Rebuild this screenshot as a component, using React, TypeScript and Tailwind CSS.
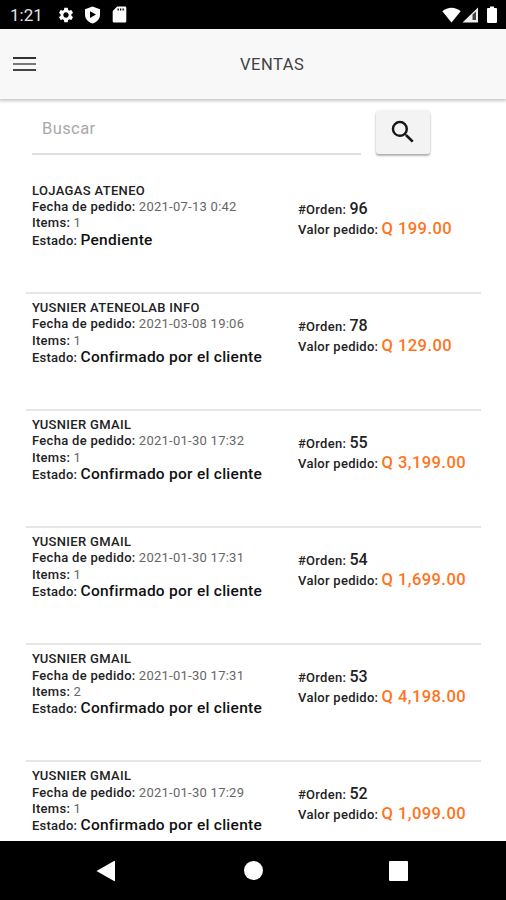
import React from 'react';
import { MdSearch, MdSettings } from 'react-icons/md';

interface Order {
  id: number;
  customer: string;
  date: string;
  items: number;
  status: string;
  total: string;
}

const ORDERS: Order[] = [
  { id: 96, customer: 'LOJAGAS ATENEO', date: '2021-07-13 0:42', items: 1, status: 'Pendiente', total: 'Q 199.00' },
  { id: 78, customer: 'YUSNIER ATENEOLAB INFO', date: '2021-03-08 19:06', items: 1, status: 'Confirmado por el cliente', total: 'Q 129.00' },
  { id: 55, customer: 'YUSNIER GMAIL', date: '2021-01-30 17:32', items: 1, status: 'Confirmado por el cliente', total: 'Q 3,199.00' },
  { id: 54, customer: 'YUSNIER GMAIL', date: '2021-01-30 17:31', items: 1, status: 'Confirmado por el cliente', total: 'Q 1,699.00' },
  { id: 53, customer: 'YUSNIER GMAIL', date: '2021-01-30 17:31', items: 2, status: 'Confirmado por el cliente', total: 'Q 4,198.00' },
  { id: 52, customer: 'YUSNIER GMAIL', date: '2021-01-30 17:29', items: 1, status: 'Confirmado por el cliente', total: 'Q 1,099.00' },
];

const StatusBar: React.FC = () => (
  <div className="h-[29px] shrink-0 bg-black text-white flex items-center justify-between pl-[10px] pr-[9px]">
    <div className="flex items-center">
      <span className="w-[47px] text-[17px] leading-none text-[#e4e4e4] pt-[2px]">1:21</span>
      <MdSettings className="w-[18px] h-[18px]" />
      <svg className="ml-[9px] w-[17px] h-[18px]" viewBox="0 0 17 18" fill="white">
        <path d="M8.500 0.500L16 3.200V8.500C16 13 12.700 16.300 8.500 17.500C4.300 16.300 1 13 1 8.500V3.200Z" />
        <path d="M6 5.200V12L12 8.600Z" fill="black" />
      </svg>
      <svg className="ml-[11px] w-[15px] h-[17px]" viewBox="0 0 15 17" fill="white">
        <path d="M5.200 0.500H13a1.300 1.300 0 0 1 1.300 1.300V15.200a1.300 1.300 0 0 1-1.300 1.300H2a1.300 1.300 0 0 1-1.300-1.300V5Z" />
        <path d="M5.500 2.500h1.300v2H5.500zM8 2.500h1.300v2H8zM10.500 2.500h1.300v2h-1.300z" fill="black" />
      </svg>
    </div>
    <div className="flex items-center">
      <svg className="w-[19px] h-[16px]" viewBox="0 0 19 16" fill="white">
        <path d="M0.300 4.300C5.500-0.500 13.500-0.500 18.700 4.300L9.500 15.500Z" />
      </svg>
      <svg className="ml-px w-[17px] h-[16px]" viewBox="0 0 17 16">
        <path d="M16 0.500V15.500H0.500Z" fill="#eee" />
        <path d="M10.500 7.500L14 4.500V13H10.500Z" fill="#444" />
      </svg>
      <svg className="ml-[8px] w-[10px] h-[17px]" viewBox="0 0 10 17" fill="white">
        <path d="M3 0.500H7V2H9a1 1 0 0 1 1 1V16a1 1 0 0 1-1 1H1a1 1 0 0 1-1-1V3a1 1 0 0 1 1-1H3Z" />
      </svg>
    </div>
  </div>
);

const Header: React.FC = () => (
  <header className="h-[70px] shrink-0 bg-[#f8f8f8] shadow-[0_1px_3px_1px_rgba(0,0,0,0.22)] flex items-center pl-[13px]">
    <button className="flex flex-col gap-[4px] w-[23px]" aria-label="Menu">
      <span className="h-[2px] w-full bg-[#333]" />
      <span className="h-[2px] w-full bg-[#777]" />
      <span className="h-[2px] w-full bg-[#444]" />
    </button>
    <h1 className="ml-[204px] pt-[2px] text-[16.5px] leading-5 tracking-[0.5px] text-[#424242]">VENTAS</h1>
  </header>
);

const SearchRow: React.FC = () => (
  <div className="h-[78px] shrink-0 flex items-start pl-[32px] pt-[11px]">
    <div className="w-[329px] h-[45px] border-b-2 border-[#dedede] pl-[10px] pt-[9px]">
      <span className="block text-[16.5px] leading-5 tracking-[0.4px] text-[#a9a9a9]">Buscar</span>
    </div>
    <button
      className="ml-[15px] mt-px w-[54px] h-[43px] rounded-[3px] bg-[#f3f3f3] shadow-[0_2px_2px_rgba(0,0,0,0.28),0_0_3px_rgba(0,0,0,0.12)] flex items-center justify-center"
      aria-label="Buscar"
    >
      <MdSearch className="w-[30px] h-[30px] mb-[2px] text-[#161616]" />
    </button>
  </div>
);

const OrderRow: React.FC<{ order: Order }> = ({ order }) => (
  <li className="h-[117.1px] shrink-0 border-b-2 border-[#e6e6e6] flex pl-[6px] text-[13px] text-[#222] whitespace-nowrap">
    <div className="w-[266px] pt-[6px] leading-[16.2px]">
      <p className="font-medium tracking-[0.34px]">{order.customer}</p>
      <p>
        <span className="font-medium tracking-[0.3px]">Fecha de pedido:</span> <span className="tracking-[0.26px] text-[#666]">{order.date}</span>
      </p>
      <p>
        <span className="font-medium tracking-[0.3px]">Items:</span> <span className="text-[#666]">{order.items}</span>
      </p>
      <p className="leading-[16px]">
        <span className="font-medium tracking-[0.25px]">Estado:</span> <span className="text-[15.5px] font-medium tracking-[0.26px] text-[#111]">{order.status}</span>
      </p>
    </div>
    <div className="pt-[22px] leading-[19px]">
      <p>
        <span className="font-medium tracking-[0.28px]">#Orden:</span> <span className="text-[16px] font-medium text-[#222]">{order.id}</span>
      </p>
      <p>
        <span className="font-medium tracking-[0.28px]">Valor pedido:</span> <span className="text-[16.5px] font-medium tracking-[0.45px] text-[#ff7420]">{order.total}</span>
      </p>
    </div>
  </li>
);

const NavBar: React.FC = () => (
  <nav className="h-[59px] shrink-0 bg-black flex items-center pl-[96px]">
    <svg className="w-[19px] h-[22px]" viewBox="0 0 19 22" fill="white">
      <path d="M0.500 11L18 1Q19 0.500 19 1.500V20.500Q19 21.500 18 21Z" />
    </svg>
    <span className="ml-[128.500px] w-[19px] h-[19px] rounded-full bg-white" />
    <span className="ml-[126px] w-[19px] h-[20px] rounded-[1px] bg-white" />
  </nav>
);

const App: React.FC = () => {
  return (
    <div className="w-[506px] h-[900px] bg-white flex flex-col overflow-hidden font-['Roboto',sans-serif]">
      <StatusBar />
      <Header />
      <main className="flex-1 min-h-0 overflow-hidden flex flex-col">
        <SearchRow />
        <ul className="ml-[26px] w-[455px] flex flex-col">
          {ORDERS.map((order) => (
            <OrderRow key={order.id} order={order} />
          ))}
        </ul>
      </main>
      <NavBar />
    </div>
  );
};

export default App;
